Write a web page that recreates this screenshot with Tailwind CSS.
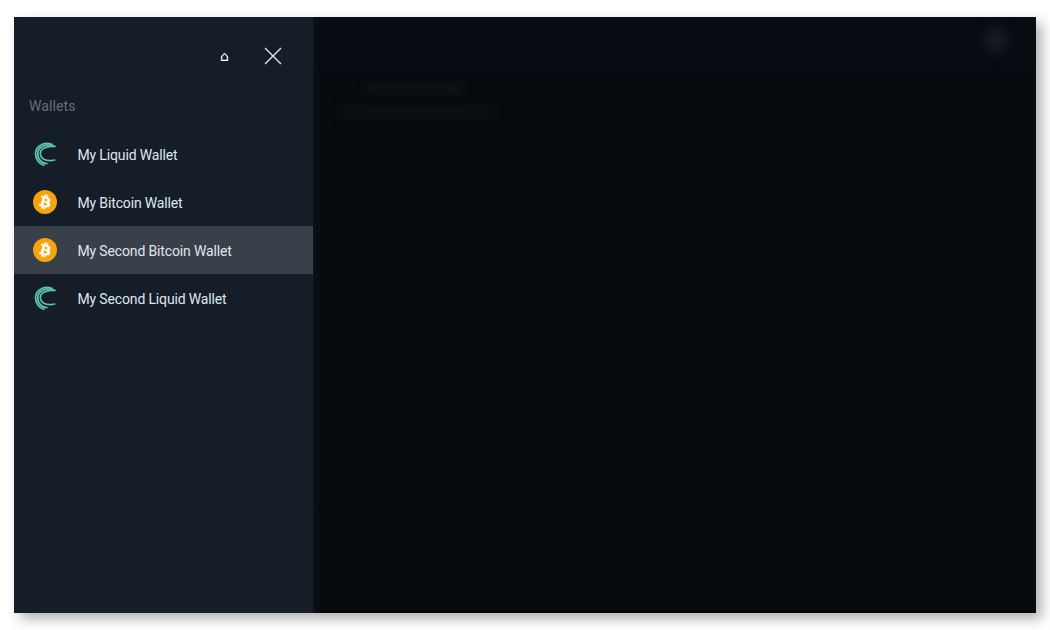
<!DOCTYPE html>
<html lang="en">
<head>
    <meta charset="UTF-8">
    <title>Wallets</title>
    <script src="https://cdn.jsdelivr.net/npm/@tailwindcss/browser@4"></script>
</head>
<body class="bg-white w-[1050px] h-[630px] overflow-hidden font-['Roboto',sans-serif]">
    <div class="pt-[17px] pl-[14px]">
        <div class="flex w-[1022px] h-[596px] bg-[#070a0f] shadow-[6px_6px_12px_rgba(0,0,0,0.3)]">
            <!-- Drawer -->
            <aside class="w-[299px] h-full bg-[#151e28] flex flex-col shrink-0">
                <div class="flex items-center justify-end h-[78px] pr-[31px] gap-[35px]">
                    <span class="text-white text-[14px] leading-none font-['DejaVu_Sans',sans-serif]">⌂</span>
                    <svg class="w-[18px] h-[18px]" viewBox="0 0 18 18" fill="none" stroke="#e8eaec" stroke-width="1.3"><path d="M1 1l16 16M17 1L1 17"/></svg>
                </div>
                <div class="pl-[15px] h-[35px] pt-[1px] text-[14px] leading-[21px] tracking-[0.1px] text-[#666d75]">Wallets</div>
                <ul class="text-[14px] tracking-[-0.15px] text-[#dfe6ee]">
                    <li class="h-[48px] flex items-center pl-[19px] gap-[20.5px]">
                        <svg class="w-[24px] h-[24px]" viewBox="0 0 24 24" fill="none" stroke="#5cc4ae" stroke-linecap="round"><path d="M19 2.500C13 -.5 3 2.500 2.500 11.500 2.500 17 6 22 11 23.300" stroke-width="1.700"/><path d="M21.700 4.300C14 1 5 4 4.700 11.500 4.500 17 9 21.500 14 21.500" stroke-width="1.700"/><path d="M21.700 4.500C13 3.500 7.300 7 7.300 11.500 7.300 16 12 20 21.700 18" stroke-width="1.700"/></svg>
                        <span class="pt-[2px]">My Liquid Wallet</span>
                    </li>
                    <li class="h-[48px] flex items-center pl-[19px] gap-[20.5px]">
                        <svg class="w-[24px] h-[24px]" viewBox="0 0 24 24"><circle cx="12" cy="12" r="12" fill="#f7a30b"/><path fill="#fff" stroke="#fff" stroke-width=".4" fill-rule="evenodd" d="M17.200 10.400c.2-1.600-1-2.400-2.600-3l.5-2.100-1.300-.3-.5 2-1-.3.5-2-1.300-.3-.5 2.100-.8-.2-1.800-.5-.3 1.400s1 .2.900.3c.5.100.6.500.6.700l-.6 2.400-1 3.400c0 .1-.1.400-.5.300l-.9-.2-.6 1.500 1.700.4.900.2-.5 2.100 1.300.3.500-2.100 1 .3-.5 2.100 1.300.3.500-2.100c2.200.4 3.900.2 4.600-1.700.6-1.600 0-2.500-1.200-3.100.9-.2 1.500-.8 1.600-2zm-3 4.200c-.4 1.600-3.100.7-4 .5l.7-2.900c.9.2 3.700.7 3.300 2.400zm.4-4.200c-.4 1.500-2.600.7-3.400.5l.6-2.600c.8.200 3.200.6 2.800 2.100z"/></svg>
                        <span class="pt-[2px]">My Bitcoin Wallet</span>
                    </li>
                    <li class="h-[48px] flex items-center pl-[19px] gap-[20.5px] bg-[#3a4049]">
                        <svg class="w-[24px] h-[24px]" viewBox="0 0 24 24"><circle cx="12" cy="12" r="12" fill="#f7a30b"/><path fill="#fff" stroke="#fff" stroke-width=".4" fill-rule="evenodd" d="M17.200 10.400c.2-1.600-1-2.400-2.600-3l.5-2.100-1.300-.3-.5 2-1-.3.5-2-1.300-.3-.5 2.100-.8-.2-1.800-.5-.3 1.400s1 .2.900.3c.5.100.6.500.6.700l-.6 2.400-1 3.400c0 .1-.1.400-.5.300l-.9-.2-.6 1.500 1.700.4.900.2-.5 2.100 1.300.3.500-2.100 1 .3-.5 2.100 1.300.3.500-2.100c2.200.4 3.900.2 4.600-1.700.6-1.600 0-2.500-1.200-3.100.9-.2 1.500-.8 1.600-2zm-3 4.200c-.4 1.600-3.100.7-4 .5l.7-2.900c.9.2 3.700.7 3.300 2.400zm.4-4.200c-.4 1.500-2.600.7-3.400.5l.6-2.600c.8.200 3.200.6 2.800 2.100z"/></svg>
                        <span class="pt-[2px]">My Second Bitcoin Wallet</span>
                    </li>
                    <li class="h-[48px] flex items-center pl-[19px] gap-[20.5px]">
                        <svg class="w-[24px] h-[24px]" viewBox="0 0 24 24" fill="none" stroke="#5cc4ae" stroke-linecap="round"><path d="M19 2.500C13 -.5 3 2.500 2.500 11.500 2.500 17 6 22 11 23.300" stroke-width="1.700"/><path d="M21.700 4.300C14 1 5 4 4.700 11.500 4.500 17 9 21.500 14 21.500" stroke-width="1.700"/><path d="M21.700 4.500C13 3.500 7.300 7 7.300 11.500 7.300 16 12 20 21.700 18" stroke-width="1.700"/></svg>
                        <span class="pt-[2px]">My Second Liquid Wallet</span>
                    </li>
                </ul>
            </aside>
            <!-- Dimmed page behind the drawer -->
            <main class="relative flex-1 h-full overflow-hidden">
                <div class="h-[50px] bg-[#080b12]"></div>
                <div class="absolute left-0 top-0 h-full w-[8px] bg-linear-to-r from-[#0d1118] to-transparent"></div>
                <div class="absolute left-[671px] top-[11px] w-[24px] h-[24px] rounded-full bg-[#1a1d21] blur-[6px]"></div>
                <div class="absolute left-[54px] top-[66px] w-[96px] h-[12px] bg-[#0e1312] blur-[5px]"></div>
                <div class="absolute left-[28px] top-[90px] w-[152px] h-[10px] bg-[#0d1112] blur-[5px]"></div>
            </main>
        </div>
    </div>
</body>
</html>
